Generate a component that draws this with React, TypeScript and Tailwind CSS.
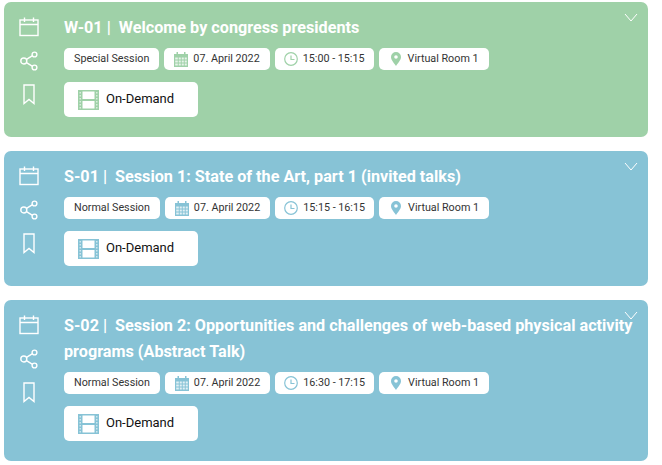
import React from 'react';

const CalendarIcon = () => (
  <svg width="20" height="20" viewBox="0 0 20 20" fill="none" stroke="#fff" strokeWidth="1.4">
    <rect x="1" y="3" width="18" height="15.5" />
    <path d="M1 7.5h18M5.5 .5v4.5M14.500 .5v4.500" />
  </svg>
);

const ShareIcon = () => (
  <svg width="18" height="20" viewBox="0 0 18 20" fill="none" stroke="#fff" strokeWidth="1.4">
    <circle cx="3.800" cy="10" r="3" />
    <circle cx="14.500" cy="3.500" r="2.400" />
    <circle cx="14.500" cy="16.500" r="2.400" />
    <path d="M6.500 8.400l6-3.700M6.500 11.600l6 3.700" />
  </svg>
);

const BookmarkIcon = () => (
  <svg width="12" height="21" viewBox="0 0 12 21" fill="none" stroke="#fff" strokeWidth="1.4">
    <path d="M1 1h10v18.500l-5-4-5 4z" />
  </svg>
);

const Chevron = () => (
  <svg width="14" height="9" viewBox="0 0 14 9" fill="none" stroke="#fff" strokeWidth="1">
    <path d="M1 1l6 7 6-7" />
  </svg>
);

const SmallCalendar = ({ color }: { color: string }) => (
  <svg width="14" height="15" viewBox="0 0 14 15" fill={color}>
    <path d="M0 2h2.500V0h1.500v2h6V0h1.500v2H14v13H0z" />
    <path
      fill="#fff"
      fillOpacity="0.75"
      d="M1.200 5.500h2.600v2H1.200zM4.700 5.500h2.100v2H4.700zM7.700 5.500h2.100v2H7.700zM10.700 5.500h2.100v2h-2.100zM1.200 8.500h2.600v2H1.200zM4.700 8.500h2.100v2H4.700zM7.700 8.500h2.100v2H7.700zM10.700 8.500h2.100v2h-2.100zM1.200 11.500h2.600v2H1.200zM4.700 11.500h2.100v2H4.700zM7.700 11.500h2.100v2H7.700zM10.700 11.500h2.100v2h-2.100z"
    />
  </svg>
);

const Clock = ({ color }: { color: string }) => (
  <svg width="14" height="14" viewBox="0 0 14 14" fill="none" stroke={color} strokeWidth="1.2">
    <circle cx="7" cy="7" r="6.300" />
    <path d="M7 3.500V7.500H10.500" />
  </svg>
);

const Pin = ({ color }: { color: string }) => (
  <svg width="10" height="14" viewBox="0 0 10 14" fill={color}>
    <path fillRule="evenodd" d="M5 0a5 5 0 0 1 5 5c0 3.200-3.500 6.500-5 9-1.500-2.500-5-5.800-5-9a5 5 0 0 1 5-5zm0 3.200a1.800 1.800 0 1 0 0 3.600 1.800 1.800 0 0 0 0-3.600z" />
  </svg>
);

const Film = ({ color }: { color: string }) => (
  <svg width="21" height="20" viewBox="0 0 21 20" fill={color}>
    <path
      fillRule="evenodd"
      d="M0 0h21v20H0zM4.500 1.500v7.500h12V1.500zM4.500 11v7.500h12V11z"
    />
    <path
      fill="#fff"
      fillOpacity="0.6"
      d="M1.500 2h1.500v1.500H1.500zM1.500 5h1.500v1.500H1.500zM1.500 8h1.500v1.500H1.500zM1.500 11h1.500v1.500H1.500zM1.500 14h1.500v1.500H1.500zM1.500 17h1.500v1.500H1.500zM18 2h1.500v1.500H18zM18 5h1.500v1.500H18zM18 8h1.500v1.500H18zM18 11h1.500v1.500H18zM18 14h1.500v1.500H18zM18 17h1.500v1.500H18z"
    />
  </svg>
);

const Pill = ({ children }: { children: React.ReactNode }) => (
  <div className="flex h-[22px] items-center rounded-[5px] bg-white text-[10.75px] text-[#333]">{children}</div>
);

type Session = { code: string; title: string; type: string; time: string; color: string };

const sessions: Session[] = [
  { code: 'W-01', title: 'Welcome by congress presidents', type: 'Special Session', time: '15:00 - 15:15', color: '#9fd1a8' },
  { code: 'S-01', title: 'Session 1: State of the Art, part 1 (invited talks)', type: 'Normal Session', time: '15:15 - 16:15', color: '#87c3d6' },
  {
    code: 'S-02',
    title: 'Session 2: Opportunities and challenges of web-based physical activity programs (Abstract Talk)',
    type: 'Normal Session',
    time: '16:30 - 17:15',
    color: '#87c3d6',
  },
];

const SessionCard = ({ session }: { session: Session }) => (
  <div className="relative flex rounded-[7px] pb-5 pt-[13px]" style={{ backgroundColor: session.color }}>
    <div className="flex w-[60px] shrink-0 flex-col items-center pt-[2px]">
      <div className="h-5 pr-[10px]"><CalendarIcon /></div>
      <div className="mt-[14px] h-5 pr-[10px]"><ShareIcon /></div>
      <div className="mt-[13px] h-[21px] pr-[10px]"><BookmarkIcon /></div>
    </div>
    <div className="min-w-0 flex-1">
      <h3 className="text-[16.2px] font-bold leading-[26px] text-white">
        {session.code}&nbsp;|&nbsp; {session.title}
      </h3>
      <div className="mt-[7px] flex gap-[5px]">
        <Pill><span className="px-[10px]">{session.type}</span></Pill>
        <Pill>
          <span className="ml-[10px] mr-[5px]"><SmallCalendar color={session.color} /></span>
          <span className="pr-[10px]">07. April 2022</span>
        </Pill>
        <Pill>
          <span className="ml-[9px] mr-[5px]"><Clock color={session.color} /></span>
          <span className="pr-[9px]">{session.time}</span>
        </Pill>
        <Pill>
          <span className="ml-[12px] mr-[7px]"><Pin color={session.color} /></span>
          <span className="pr-[10px]">Virtual Room 1</span>
        </Pill>
      </div>
      <div className="mt-3 flex h-[35px] w-[134px] items-center rounded-[5px] bg-white pl-[14px] text-[13px] text-[#111]">
        <Film color={session.color} />
        <span className="relative -top-px ml-[7px]">On-Demand</span>
      </div>
    </div>
    <div className="absolute right-[10px] top-[11px]"><Chevron /></div>
  </div>
);

const App: React.FC = () => {
  return (
    <div className="h-[465px] w-[662px] overflow-hidden bg-white pl-1 pr-[14px] pt-[2px] font-['Roboto',sans-serif]">
      <div className="flex flex-col gap-[14px]">
        {sessions.map((s) => (
          <SessionCard key={s.code} session={s} />
        ))}
      </div>
    </div>
  );
};

export default App;
